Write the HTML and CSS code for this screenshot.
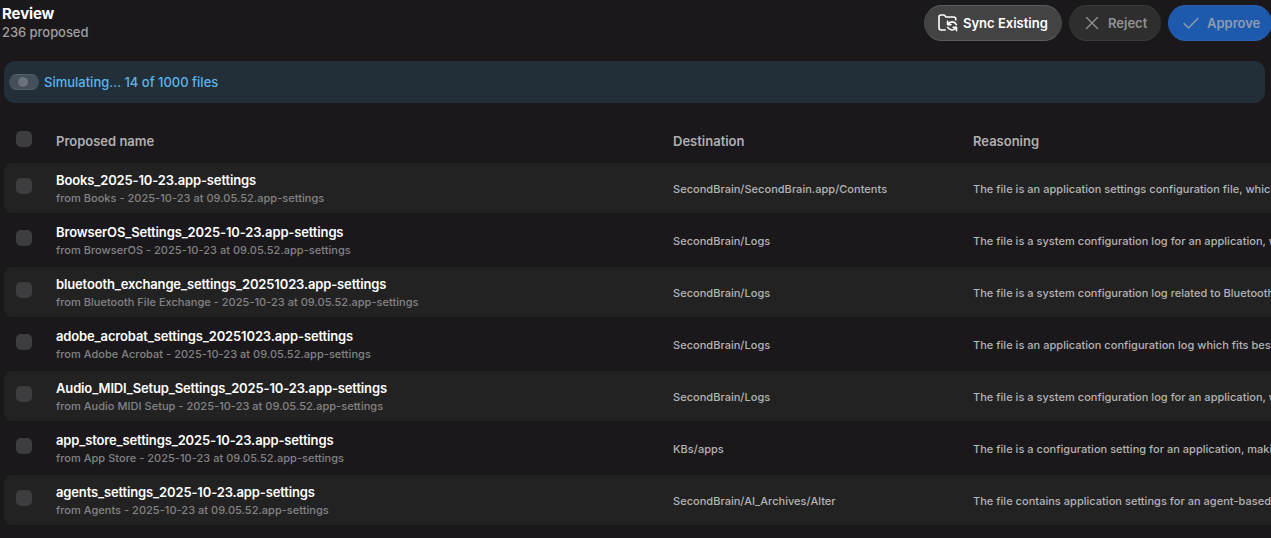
FILE: index.html
```html
<!DOCTYPE html>
<html lang="en">
<head>
  <meta charset="UTF-8">
  <title>Review</title>
  <link rel="stylesheet" href="styles.css">
</head>
<body>
  <header>
    <div class="heading">
      <h1>Review</h1>
      <p>236 proposed</p>
    </div>
    <div class="actions">
      <button class="btn btn-sync">
        <svg width="20" height="18" viewBox="0 0 20 18" fill="none" stroke="currentColor" stroke-width="1.6" stroke-linecap="round" stroke-linejoin="round">
          <path d="M7.2 16H3.2Q1 16 1 13.8V3Q1 1 3 1H5.6Q6.4 1 7 1.8L8 3H15.6Q17.8 3 17.8 5.2V6"/>
          <path d="M9.6 7.3V10.6H12.9M10 10.2Q12 7.4 14.6 7.9Q17.3 8.3 18.4 10.6"/>
          <path d="M18.5 16.7V13.4H15.2M18.1 13.8Q16.2 16.3 13.6 15.9Q10.9 15.4 9.7 13.4"/>
        </svg>
        <span>Sync Existing</span>
      </button>
      <button class="btn btn-reject" disabled>
        <svg width="14" height="14" viewBox="0 0 14 14" fill="none" stroke="currentColor" stroke-width="1.4" stroke-linecap="round">
          <path d="M1.5 1.5l11 11M12.5 1.5l-11 11"/>
        </svg>
        <span>Reject</span>
      </button>
      <button class="btn btn-approve" disabled>
        <svg width="16" height="12" viewBox="0 0 16 12" fill="none" stroke="currentColor" stroke-width="1.4" stroke-linecap="round" stroke-linejoin="round">
          <path d="M1 6.5l4.5 4.5L15 1.2"/>
        </svg>
        <span>Approve</span>
      </button>
    </div>
  </header>

  <div class="banner">
    <span class="toggle"></span>
    <span>Simulating... 14 of 1000 files</span>
  </div>

  <div class="table">
    <div class="row head">
      <span class="check"></span>
      <div>Proposed name</div>
      <div>Destination</div>
      <div>Reasoning</div>
    </div>
    <div class="row">
      <span class="check"></span>
      <div class="file">
        <div class="name">Books_2025-10-23.app-settings</div>
        <div class="from">from Books - 2025-10-23 at 09.05.52.app-settings</div>
      </div>
      <div class="dest">SecondBrain/SecondBrain.app/Contents</div>
      <div class="reason">The file is an application settings configuration file, which</div>
    </div>
    <div class="row">
      <span class="check"></span>
      <div class="file">
        <div class="name">BrowserOS_Settings_2025-10-23.app-settings</div>
        <div class="from">from BrowserOS - 2025-10-23 at 09.05.52.app-settings</div>
      </div>
      <div class="dest">SecondBrain/Logs</div>
      <div class="reason">The file is a system configuration log for an application, which</div>
    </div>
    <div class="row">
      <span class="check"></span>
      <div class="file">
        <div class="name">bluetooth_exchange_settings_20251023.app-settings</div>
        <div class="from">from Bluetooth File Exchange - 2025-10-23 at 09.05.52.app-settings</div>
      </div>
      <div class="dest">SecondBrain/Logs</div>
      <div class="reason">The file is a system configuration log related to Bluetooth</div>
    </div>
    <div class="row">
      <span class="check"></span>
      <div class="file">
        <div class="name">adobe_acrobat_settings_20251023.app-settings</div>
        <div class="from">from Adobe Acrobat - 2025-10-23 at 09.05.52.app-settings</div>
      </div>
      <div class="dest">SecondBrain/Logs</div>
      <div class="reason">The file is an application configuration log which fits best</div>
    </div>
    <div class="row">
      <span class="check"></span>
      <div class="file">
        <div class="name">Audio_MIDI_Setup_Settings_2025-10-23.app-settings</div>
        <div class="from">from Audio MIDI Setup - 2025-10-23 at 09.05.52.app-settings</div>
      </div>
      <div class="dest">SecondBrain/Logs</div>
      <div class="reason">The file is a system configuration log for an application, which</div>
    </div>
    <div class="row">
      <span class="check"></span>
      <div class="file">
        <div class="name">app_store_settings_2025-10-23.app-settings</div>
        <div class="from">from App Store - 2025-10-23 at 09.05.52.app-settings</div>
      </div>
      <div class="dest">KBs/apps</div>
      <div class="reason">The file is a configuration setting for an application, making</div>
    </div>
    <div class="row">
      <span class="check"></span>
      <div class="file">
        <div class="name">agents_settings_2025-10-23.app-settings</div>
        <div class="from">from Agents - 2025-10-23 at 09.05.52.app-settings</div>
      </div>
      <div class="dest">SecondBrain/AI_Archives/Alter</div>
      <div class="reason">The file contains application settings for an agent-based</div>
    </div>
  </div>
</body>
</html>
```
FILE: styles.css
```css
* {
  box-sizing: border-box;
}

body {
  margin: 0;
  height: 538px;
  overflow: hidden;
  font-family: 'Inter', sans-serif;
  background-color: #1a181b;
  color: #fff;
}

header {
  display: flex;
  justify-content: space-between;
  height: 61px;
  padding: 5px 0 0 2px;
}

h1 {
  margin: 0;
  font-size: 15px;
  font-weight: 700;
  line-height: 18px;
  letter-spacing: -0.1px;
}

.heading p {
  margin: 1px 0 0;
  font-size: 13px;
  line-height: 16px;
  font-weight: 500;
  letter-spacing: -0.05px;
  color: #a09fa0;
}

.actions {
  display: flex;
  gap: 7px;
  margin-right: -1px;
}

.btn {
  display: flex;
  align-items: center;
  height: 36px;
  border: 1px solid;
  border-radius: 18px;
  padding: 0 0 0 13px;
  font-family: inherit;
  font-size: 13px;
  font-weight: 600;
  white-space: nowrap;
}

.btn-sync {
  width: 138px;
  gap: 5px;
  background-color: #444344;
  border-color: #5b5a5c #474648;
  color: #fff;
}

.btn-reject {
  width: 92px;
  padding-left: 15px;
  gap: 9px;
  background-color: #2f2e2f;
  border-color: #3b3a3b #323132;
  color: #929192;
}

.btn-approve {
  width: 104px;
  padding-left: 14px;
  gap: 8px;
  background-color: #1d5aae;
  border-color: #2a62b0 #1d5aae;
  color: #919baa;
}

.banner {
  display: flex;
  align-items: center;
  gap: 5px;
  height: 42px;
  margin: 0 6px 0 4px;
  padding-left: 5px;
  border-radius: 11px;
  background-color: #222e38;
  color: #5ab6ec;
  font-size: 13px;
  font-weight: 500;
}

.toggle {
  display: flex;
  align-items: center;
  width: 30px;
  height: 16px;
  padding-left: 8px;
  border: 1px solid;
  border-color: #56606a #444f59;
  border-radius: 8px;
  background-color: #444f59;
}

.toggle::before {
  content: "";
  width: 10px;
  height: 10px;
  border-radius: 50%;
  background-color: #69737b;
}

.table {
  display: flex;
  flex-direction: column;
  gap: 2px;
  margin: 17px 0 0 4px;
}

.row {
  display: grid;
  grid-template-columns: 40px 617px 300px 1fr;
  height: 50px;
  padding-left: 12px;
  border-radius: 8px 0 0 8px;
  white-space: nowrap;
}

.row:nth-child(even) {
  background-color: #232223;
}

.row.head {
  height: 41px;
  padding-top: 13px;
  font-size: 13px;
  font-weight: 600;
  line-height: 17px;
  color: #b0afb0;
}

.check {
  width: 16px;
  height: 16px;
  margin-top: 15px;
  border-radius: 5px;
  background-color: #3d3c3e;
}

.head .check {
  margin-top: -2px;
}

.name {
  margin-top: 9px;
  font-size: 13px;
  font-weight: 600;
  line-height: 17px;
  letter-spacing: -0.14px;
}

.from {
  margin-top: 2px;
  font-size: 11px;
  font-weight: 500;
  line-height: 14px;
  letter-spacing: 0.03px;
  color: #838283;
}

.dest,
.reason {
  padding-top: 19px;
  font-size: 11px;
  font-weight: 500;
  line-height: 14px;
  letter-spacing: 0.03px;
  color: #b4b3b4;
}

.reason {
  min-width: 0;
  overflow: hidden;
}
```
